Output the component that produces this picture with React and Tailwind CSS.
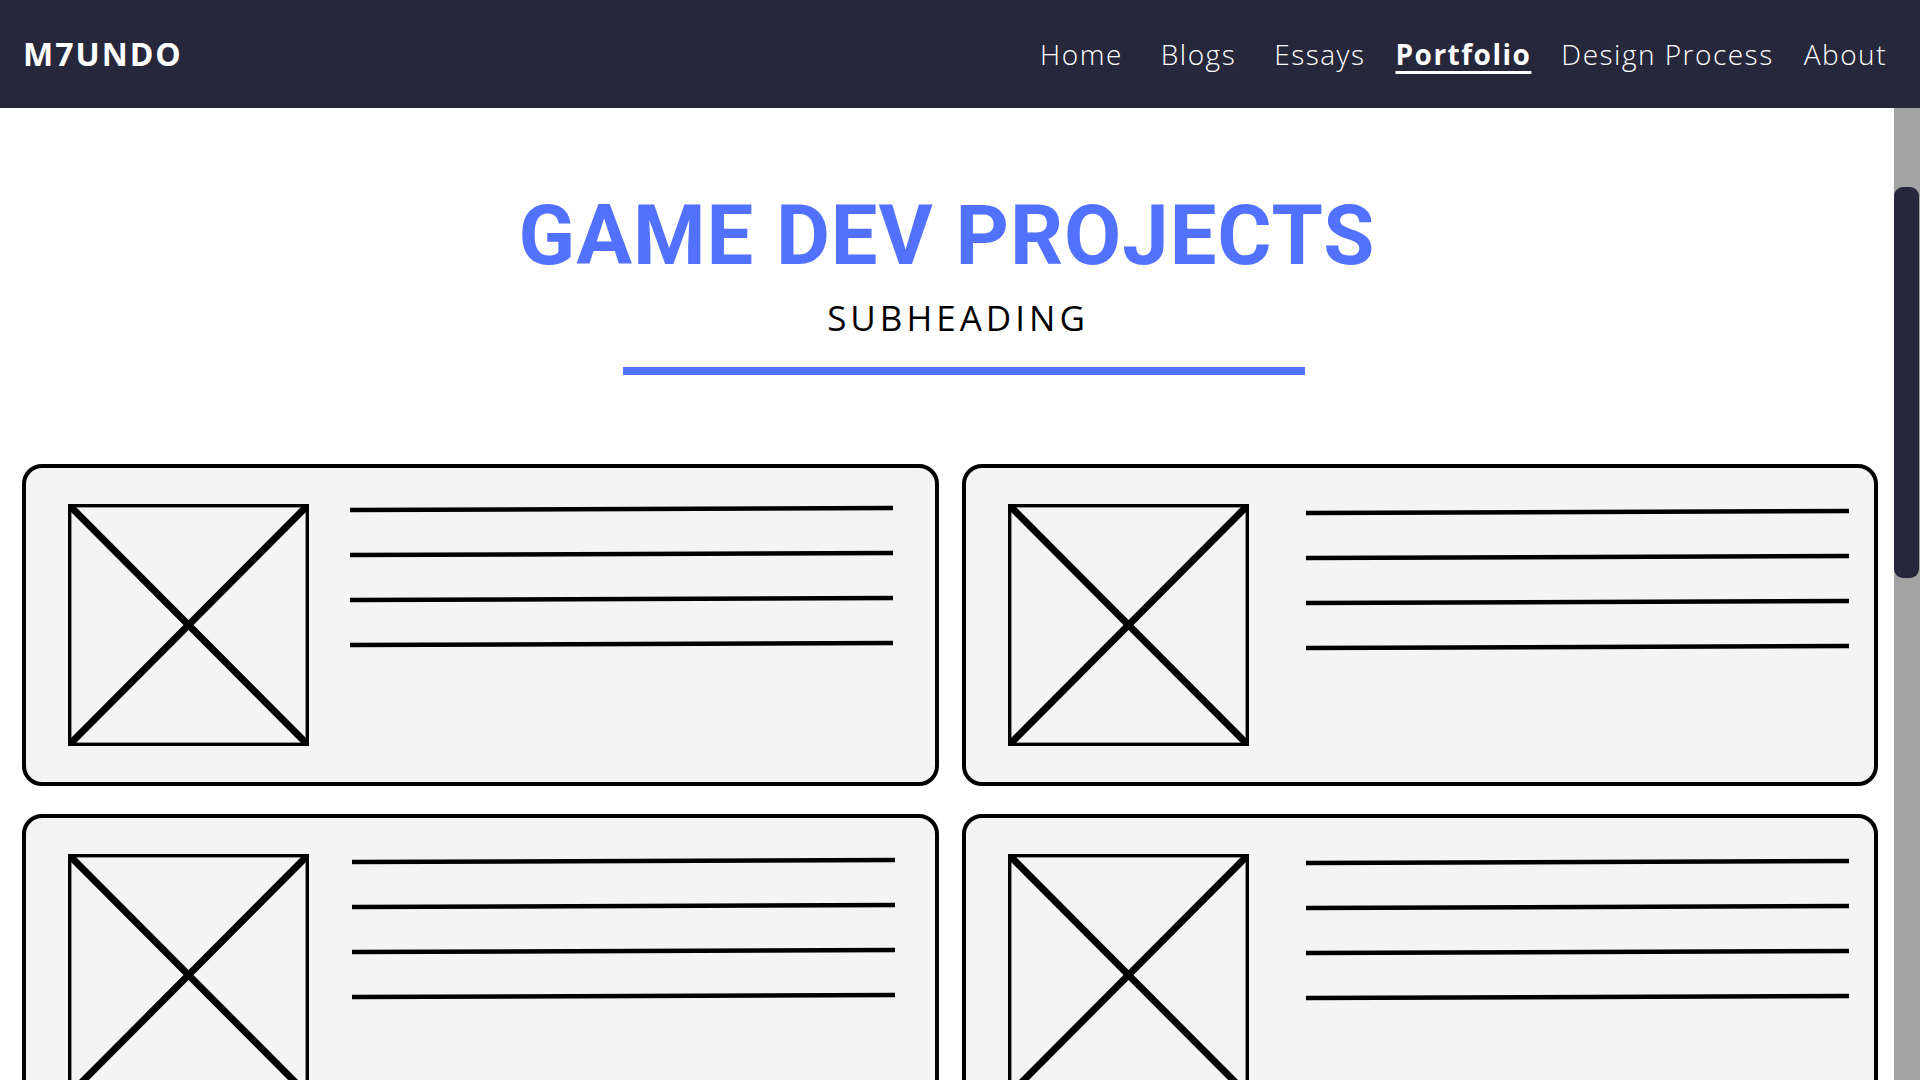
import React from "react";

const links = [
  { label: "Home", cls: "mr-[8px]" },
  { label: "Blogs", cls: "mr-[8px]" },
  { label: "Essays", cls: "" },
  { label: "Portfolio", cls: "" },
  { label: "Design Process", cls: "" },
  { label: "About", cls: "" },
];

// each card is a wireframe picture, the line block sits a little differently in each one
const cards = [
  { gap: "ml-[41px]", ly: 0 },
  { gap: "ml-[57px]", ly: 3 },
  { gap: "ml-[43px]", ly: 2 },
  { gap: "ml-[57px]", ly: 3 },
  { gap: "ml-[41px]", ly: 0 },
  { gap: "ml-[57px]", ly: 3 },
];

const ImageBox = () => (
  <svg width="241" height="242" viewBox="0 0 241 242" className="shrink-0">
    <rect x="1.7" y="1.7" width="237.6" height="238.6" fill="#f4f4f4" stroke="#000" strokeWidth="3.4" />
    <line x1="0" y1="0" x2="241" y2="242" stroke="#000" strokeWidth="7" />
    <line x1="241" y1="0" x2="0" y2="242" stroke="#000" strokeWidth="7" />
  </svg>
);

const TextLines = ({ gap, ly }) => (
  <svg width="545" height="170" viewBox="0 0 545 170" className={`shrink-0 ${gap}`}>
    {[0, 1, 2, 3].map((k) => {
      const y = 5 + ly + k * 45;
      return <line key={k} x1="0" y1={y + 1} x2="543" y2={y - 1} stroke="#000" strokeWidth="4.5" />;
    })}
  </svg>
);

const Card = ({ gap, ly }) => (
  <div className="h-[322px] rounded-[20px] border-4 border-black bg-[#f4f4f4] flex items-start pl-[42px] pt-[36px] overflow-hidden">
    <ImageBox />
    <TextLines gap={gap} ly={ly} />
  </div>
);

export default function App() {
  return (
    <div className="h-screen w-full flex flex-col bg-white font-['Open_Sans',sans-serif] overflow-hidden">
      <nav className="h-[108px] shrink-0 bg-[#27273b] flex items-center justify-between pl-[23px] pr-[33px] text-white">
        <div className="text-[32px] font-bold tracking-[2px] leading-none">M7UNDO</div>
        <ul className="flex items-center gap-[30px] text-[28px] leading-none tracking-[1.5px]">
          {links.map((l) => (
            <li key={l.label} className={l.cls}>
              <a
                href="#"
                className={
                  l.label === "Portfolio"
                    ? "font-bold underline underline-offset-[6px] decoration-[3px]"
                    : "font-light"
                }
              >
                {l.label}
              </a>
            </li>
          ))}
        </ul>
      </nav>

      <div className="flex-1 flex min-h-0">
        <main className="flex-1 overflow-hidden pt-[86px]">
          <h1 className="text-center text-[83px] leading-none font-bold tracking-[1px] text-[#5271ff] font-['Roboto',sans-serif]">
            GAME DEV PROJECTS
          </h1>
          <p className="mt-[23px] pl-[22px] text-center text-[35px] leading-none tracking-[4px] text-black">SUBHEADING</p>
          <div className="mt-[32px] flex justify-center pl-[34px]">
            <div className="h-[8px] w-[682px] bg-[#5271ff]" />
          </div>

          <div className="mt-[89px] grid grid-cols-2 gap-x-[23px] gap-y-[28px] pl-[22px] pr-[16px]">
            {cards.map((c, i) => (
              <Card key={i} gap={c.gap} ly={c.ly} />
            ))}
          </div>
        </main>

        {/* page scrollbar */}
        <div className="w-[26px] shrink-0 bg-[#a3a3a3] pt-[79px]">
          <div className="h-[391px] w-[25px] rounded-[9px] bg-[#27273b]" />
        </div>
      </div>
    </div>
  );
}
